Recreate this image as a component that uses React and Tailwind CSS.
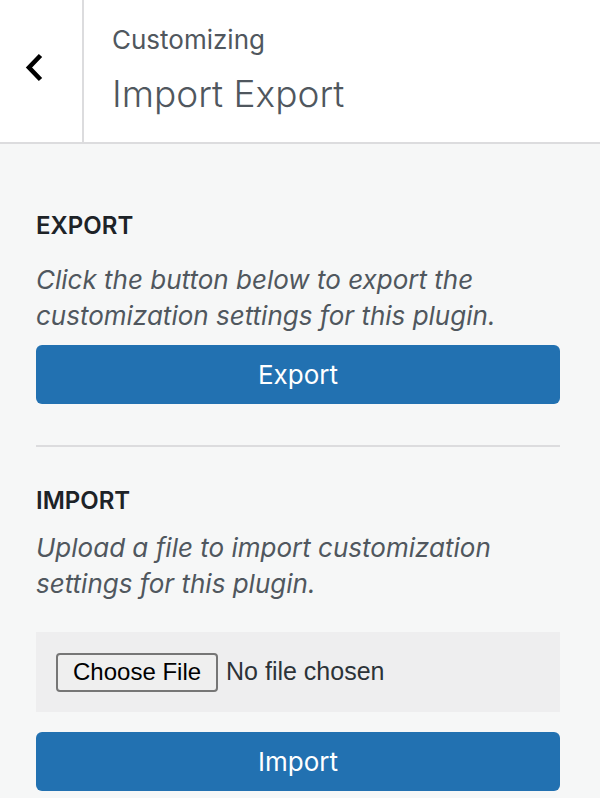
import React from "react";

export default function App() {
  return (
    <div className="w-[600px] h-[798px] overflow-hidden bg-[#f6f7f7] font-['Inter',sans-serif]">
      {/* Header */}
      <div className="flex h-[144px] bg-white border-b-2 border-[#dcdcde]">
        <div className="w-[84px] shrink-0 border-r-2 border-[#dcdcde] pl-[23px] pt-[52px]">
          <svg width="22" height="32" viewBox="0 0 22 32">
            <path d="M17.5 3.5 L6 15.5 L17.5 27.5" fill="none" stroke="#000" strokeWidth="4.6" strokeLinecap="butt" strokeLinejoin="miter" />
          </svg>
        </div>
        <div className="pl-[28px] pt-[25px]">
          <div className="text-[26px] leading-[30px] text-[#50575e]">Customizing</div>
          <div className="mt-[16px] text-[37px] leading-[46px] text-[#50575e] font-light">Import Export</div>
        </div>
      </div>

      {/* Body */}
      <div className="pl-[36px] pr-[40px] pt-[68px]">
        <div className="text-[24px] leading-[28px] font-semibold text-[#1d2327]">EXPORT</div>
        <p className="mt-[22px] text-[26px] leading-[36px] italic text-[#50575e]">
          Click the button below to export the customization settings for this plugin.
        </p>
        <button className="mt-[11px] w-full h-[59px] rounded-[6px] bg-[#2271b1] text-white text-[26px] flex items-center justify-center">
          Export
        </button>
        <div className="mt-[41px] h-[2px] bg-[#dcdcde]"></div>

        <div className="mt-[40px] text-[24px] leading-[28px] font-semibold text-[#1d2327]">IMPORT</div>
        <p className="mt-[15px] text-[26px] leading-[36px] italic text-[#50575e]">
          Upload a file to import customization settings for this plugin.
        </p>
        <div className="mt-[30px] h-[80px] bg-[#eeeeef] flex items-center pl-[20px] font-['Liberation_Sans',sans-serif]">
          <span className="h-[39px] px-[15px] flex items-center rounded-[4px] border-2 border-[#767676] bg-[#efefef] text-[24px] text-black">
            Choose File
          </span>
          <span className="ml-[8px] text-[25px] text-[#2c3338]">No file chosen</span>
        </div>
        <button className="mt-[20px] w-full h-[59px] rounded-[6px] bg-[#2271b1] text-white text-[26px] flex items-center justify-center">
          Import
        </button>
      </div>
    </div>
  );
}
